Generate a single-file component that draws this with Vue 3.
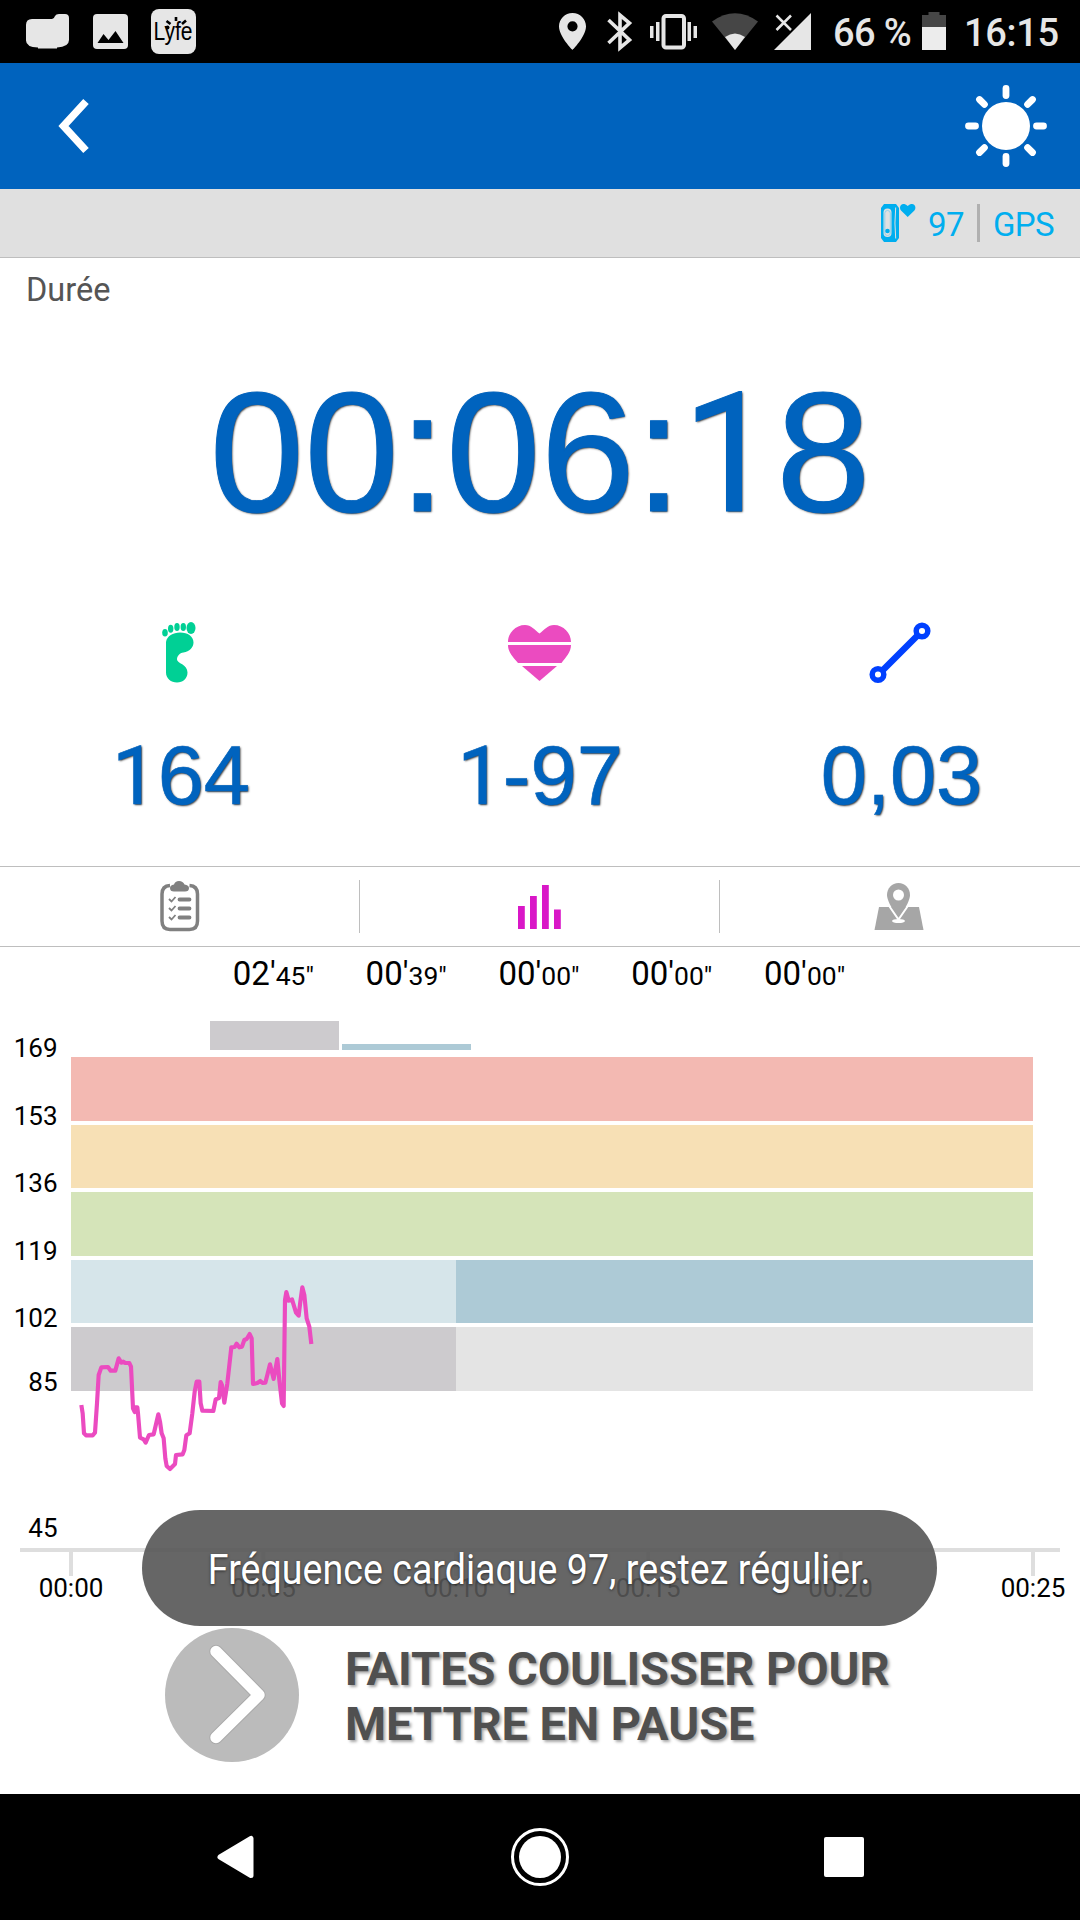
<template>
  <div class="screen">
    <div class="statusbar">
      <svg class="status-left" width="210" height="63" viewBox="0 0 210 63">
        <path d="M26 25q0-6 6-6h20q2 0 3-3 1-2 4-2h6q4 0 4 4v22q0 7-12 7.500v1H38v-1q-12-.5-12-7z" fill="#e6e6e6" />
        <rect x="93" y="14" width="35" height="35" rx="4" fill="#e6e6e6" />
        <path d="M97.500 43l6-9 5 6 7-9 8 12z" fill="#000" />
        <rect x="151" y="9" width="45" height="45" rx="8" fill="#e6e6e6" />
        <text class="lyfe" x="153.500" y="40" textLength="39" lengthAdjust="spacingAndGlyphs">Lyfe</text>
        <path d="M166.500 21l4 3M176 17v4M186 20.500l-4 3.500" stroke="#000" stroke-width="2.600" />
        <circle cx="167.500" cy="27.500" r="2" />
      </svg>
      <div class="status-right">
        <svg width="260" height="63" viewBox="555 0 260 63" fill="#e6e6e6">
          <path fill-rule="evenodd" d="M572.500 13c-7.600 0-13.500 6-13.500 13.300C559 36.500 572.500 50 572.500 50S586 36.500 586 26.300C586 19 580.100 13 572.500 13zm0 8.200a5.100 5.100 0 110 10.200 5.100 5.100 0 010-10.200z" />
          <path d="M608.500 20l21 20-9.500 8V15l9.500 8-21 20" fill="none" stroke="#e6e6e6" stroke-width="3.600" />
          <rect x="663.500" y="16" width="20.500" height="31.500" rx="2.500" fill="none" stroke="#e6e6e6" stroke-width="4" />
          <path d="M650 26h3.500v12H650zM656 22h3.500v19H656zM687.500 22h3.500v19h-3.500zM693.500 26h3.500v12h-3.500z" />
          <path d="M712 21.500Q735 5 758 21.500L735 50z" fill="#464646" />
          <path d="M725 37q10-7 20 0L735 50z" />
          <path d="M811 13v37h-37z" />
          <path d="M776.500 15.500l14.500 14.500M791 15.500l-14.500 14.500" stroke="#e6e6e6" stroke-width="2.500" />
        </svg>
        <span class="percent">66 %</span>
        <svg width="24" height="63" viewBox="0 0 24 63">
          <path d="M0 27V15h6.500v-3h11v3H24v12z" fill="#464646" />
          <path d="M0 27h24v23H0z" fill="#ececec" />
        </svg>
        <span class="clock">16:15</span>
      </div>
    </div>

    <header class="header">
      <svg width="40" height="60" viewBox="0 0 40 60">
        <path d="M32 5.500L9.500 30 32 54.500" fill="none" stroke="#fff" stroke-width="7.500" />
      </svg>
      <svg width="84" height="84" viewBox="-42 -42 84 84">
        <circle r="24" fill="#fff" />
        <path
          v-for="a in 8"
          :key="a"
          d="M0 -30.500V-37.500"
          :transform="`rotate(${a * 45})`"
          stroke="#fff"
          stroke-width="6.800"
          stroke-linecap="round"
        />
      </svg>
    </header>

    <div class="sensors">
      <svg width="35" height="38" viewBox="0 0 35 38" fill="#00aeef">
        <path d="M3 0h12l3 4v30l-3 4H3l-3-4V4z" />
        <path d="M14.700 3.500q-1.500 15.500 0 31" fill="none" stroke="#e0e0e0" stroke-width="1" />
        <rect x="2.500" y="4.500" width="8" height="28.500" rx="4" fill="#e0e0e0" />
        <rect x="3.800" y="6.500" width="5.500" height="25" rx="2.700" fill="none" stroke="#7fcdec" stroke-width=".8" />
        <circle cx="6.500" cy="27" r="2.300" />
        <path d="M26.700 13L20 6.500Q18 3.500 20 1q3.500-2.500 6.700 1 3.200-3.500 6.700-1 2 2.500 0 5.500z" />
      </svg>
      <span class="bpm">97</span>
      <span class="divider" />
      <span class="gps">GPS</span>
    </div>

    <section class="summary">
      <div class="label">Durée</div>
      <div class="timer"><span v-for="(c, i) in duration" :key="i" :class="{ one: c === '1' }">{{ c }}</span></div>
      <div class="stats">
        <div class="stat">
          <svg width="66" height="66" viewBox="147 620 66 66" fill="#00d095">
            <ellipse cx="191" cy="628" rx="4.500" ry="6" />
            <ellipse cx="183.300" cy="627" rx="2.700" ry="4" />
            <ellipse cx="177" cy="627" rx="2.700" ry="4" />
            <ellipse cx="170.700" cy="628.700" rx="2.700" ry="4" />
            <ellipse cx="165" cy="632.700" rx="2.800" ry="3.800" />
            <path d="M166 642c1-6 7-9.500 14-9.500 8 0 13.500 4 13.500 10 0 5-4 9-10 10-4 .5-6.500 3.500-6.500 7 0 4 10.500 4.500 10.500 13 0 6-4.500 10-10.500 10s-11-4-11-10z" />
          </svg>
          <div class="value steps"><span v-for="(c, i) in '164'" :key="i" :class="{ one: c === '1' }">{{ c }}</span></div>
        </div>
        <div class="stat">
          <svg width="66" height="66" viewBox="507 620 66 66" fill="#eb4bc0">
            <path d="M508 642c0-9 7.500-17 17-17 6 0 10 5 14.500 8.500C544 630 548 625 554 625c9.500 0 17 8 17 17z" />
            <path d="M508 645h63c0 7-5 12-9.500 18h-43.500c-5-6-10-11-10-18z" />
            <path d="M522 666h35l-17.500 15z" />
          </svg>
          <div class="value"><span v-for="(c, i) in '1-97'" :key="i" :class="{ one: c === '1' }">{{ c }}</span></div>
        </div>
        <div class="stat">
          <svg width="66" height="66" viewBox="867 620 66 66" fill="none" stroke="#0040ff">
            <path d="M882 671l36-36" stroke-width="6.500" />
            <circle cx="878" cy="674.500" r="5.800" stroke-width="5.500" />
            <circle cx="922" cy="631" r="5.800" stroke-width="5.500" />
          </svg>
          <div class="value distance">0,03</div>
        </div>
      </div>
    </section>

    <nav class="tabs">
      <div class="tab">
        <svg width="40" height="51" viewBox="0 0 40 51" fill="none" stroke="#808080">
          <path d="M10 4.500Q2 5 2 13v27q0 8.500 8 8.500h19.500q8 0 8-8.500V13q0-8-8-8.500" stroke-width="3.500" />
          <path d="M14 10.500q-4 0-4-3.500 0-3 4-3.500 1-3.500 5-3.500t5.500 3.500Q29 4 29 7q0 3.500-4 3.500z" fill="#808080" stroke="none" />
          <path d="M19.500 18.500h10M19.500 27.500h10M19.500 36.500h10" stroke-width="3.800" stroke-linecap="round" />
          <path d="M9 18l2.500 2.500 4-4.500M9 27l2.500 2.500 4-4.500M9 36l2.500 2.500 4-4.500" stroke-width="1.800" />
        </svg>
      </div>
      <div class="tab">
        <svg width="44" height="44" viewBox="0 1 44 44" fill="#d917c7">
          <path d="M0 22h6.800v23H0zM12 12h6.800v33H12zM24 1h6.800v44H24zM36 25.500h6.800V45H36z" />
        </svg>
      </div>
      <div class="tab">
        <svg width="50" height="47" viewBox="0 0 50 47">
          <path d="M5 24h40l4.500 23H.5z" fill="#a6a6a6" />
          <path d="M24.500 0C18 0 13 5 13 12c0 8 11.500 23 11.500 23S36 20 36 12C36 5 31 0 24.500 0z" fill="#a6a6a6" />
          <path d="M15.500 23.500l9 13 9-13" fill="none" stroke="#fff" stroke-width="2" />
          <circle cx="24.500" cy="12" r="5.500" fill="#fff" />
          <ellipse cx="24.500" cy="38" rx="6.500" ry="2" fill="#fff" />
        </svg>
      </div>
    </nav>

    <div class="zones">
      <div v-for="(z, i) in zones" :key="i" class="zone">{{ z[0] }}'<small>{{ z[1] }}"</small></div>
    </div>

    <svg class="chart" width="1080" height="600" viewBox="0 0 1080 600">
      <!-- time spent per zone -->
      <rect x="210" y="1" width="129" height="29" fill="#cdcbce" />
      <rect x="342" y="24" width="129" height="6" fill="#adcad6" />

      <!-- heart rate zones -->
      <rect v-for="b in bands" :key="b.y" x="71" :y="b.y" width="962" :height="b.h" :fill="b.color" />
      <rect x="71" y="240" width="385" height="63" fill="#d6e5ea" />
      <rect x="71" y="307" width="385" height="64" fill="#cdcbce" />

      <text v-for="l in levels" :key="l.v" x="57.500" :y="l.y" text-anchor="end">{{ l.v }}</text>

      <path d="M20 528h1040v4H20z" fill="#dedede" />
      <g v-for="(t, i) in ticks" :key="t">
        <rect :x="69 + i * 192.4" y="532" width="4" height="24" fill="#dedede" />
        <text :x="71 + i * 192.4" y="577" text-anchor="middle">{{ t }}</text>
      </g>

      <g transform="translate(60 250) scale(.33333)">
        <polyline :points="pulse" fill="none" stroke="#eb4bc0" stroke-width="12.500" stroke-linejoin="round" />
      </g>
    </svg>

    <div class="slider">
      <svg width="134" height="134" viewBox="0 0 134 134">
        <circle cx="67" cy="67" r="67" fill="#bbb" />
        <path d="M51 23.500L94 67 51 109.500" fill="none" stroke="#aaa" stroke-width="13.500" stroke-linecap="round" stroke-linejoin="round" />
        <path d="M51 23.500L94 67 51 109.500" fill="none" stroke="#fff" stroke-width="11.500" stroke-linecap="round" stroke-linejoin="round" />
      </svg>
      <div class="slider-text">FAITES COULISSER POUR<br>METTRE EN PAUSE</div>
    </div>

    <div class="navbar">
      <svg width="60" height="60" viewBox="-32 -30 60 60">
        <path d="M-18 0L13 -18.500V18.500z" fill="#fff" stroke="#fff" stroke-width="5" stroke-linejoin="round" />
      </svg>
      <svg width="60" height="60" viewBox="-30 -30 60 60">
        <circle r="27.500" fill="none" stroke="#fff" stroke-width="3" />
        <circle r="21" fill="#fff" />
      </svg>
      <svg width="60" height="60" viewBox="-30 -30 60 60">
        <rect x="-20" y="-20" width="40" height="40" rx="2" fill="#fff" />
      </svg>
    </div>

    <div class="toast">
      <span>Fréquence cardiaque 97, restez régulier.</span>
    </div>
  </div>
</template>

<script setup>
const duration = '00:06:18'

const zones = [
  ['02', '45'],
  ['00', '39'],
  ['00', '00'],
  ['00', '00'],
  ['00', '00'],
]

const bands = [
  { y: 37, h: 64, color: '#f3b9b2' },
  { y: 105, h: 63, color: '#f7e0b5' },
  { y: 172, h: 64, color: '#d5e4b9' },
  { y: 240, h: 63, color: '#adcad6' },
  { y: 307, h: 64, color: '#e4e4e4' },
]

const levels = [
  { v: 169, y: 37 },
  { v: 153, y: 105 },
  { v: 136, y: 172 },
  { v: 119, y: 240 },
  { v: 102, y: 307 },
  { v: 85, y: 371 },
  { v: 45, y: 517 },
]

const ticks = ['00:00', '00:05', '00:10', '00:15', '00:20', '00:25']

const pulse = [
  [64, 405], [68, 430], [72, 490], [78, 496], [98, 496], [105, 488], [111, 400], [116, 315],
  [124, 292], [144, 291], [152, 302], [166, 302], [176, 265], [184, 278], [190, 275], [196, 279],
  [208, 279], [213, 290], [219, 415], [224, 426], [226, 412], [232, 412], [234, 430], [240, 503],
  [251, 508], [257, 518], [267, 495], [281, 493], [295, 433], [300, 455], [305, 490], [311, 505],
  [316, 565], [320, 588], [330, 597], [345, 582], [348, 555], [368, 553], [373, 540], [379, 496],
  [389, 490], [397, 430], [404, 365], [410, 335], [418, 335], [422, 400], [427, 422], [460, 423],
  [467, 388], [477, 384], [482, 336], [486, 345], [493, 398], [502, 340], [514, 232], [524, 231],
  [530, 221], [538, 232], [546, 230], [553, 210], [560, 207], [569, 192], [575, 205], [579, 342],
  [592, 339], [601, 333], [608, 339], [616, 338], [622, 315], [630, 283], [641, 327], [652, 267],
  [658, 330], [666, 400], [671, 408], [675, 90], [679, 66], [686, 92], [696, 88], [708, 128],
  [716, 137], [721, 95], [727, 52], [733, 75], [740, 145], [748, 170], [754, 222],
].join(' ')
</script>

<style>
body {
  margin: 0;
  background: #fff;
}
</style>

<style scoped>
.screen {
  position: relative;
  display: flex;
  flex-direction: column;
  width: 1080px;
  height: 1920px;
  overflow: hidden;
  background: #fff;
  font-family: Roboto, sans-serif;
}

svg {
  display: block;
  flex: none;
}

.statusbar {
  display: flex;
  justify-content: space-between;
  height: 63px;
  background: #000;
  color: #e6e6e6;
  font-size: 38px;
  font-weight: 500;
  line-height: 67px;
}
.lyfe {
  font: 25px 'Liberation Sans', sans-serif;
  fill: #000;
}
.status-right {
  display: flex;
  width: 525px;
}
.percent {
  width: 89px;
  margin-left: 18px;
  letter-spacing: -0.6px;
  white-space: nowrap;
}
.clock {
  margin-left: 18px;
  letter-spacing: -0.3px;
}

.header {
  display: flex;
  justify-content: space-between;
  align-items: center;
  height: 126px;
  padding: 0 32px 0 54px;
  background: #0063be;
}

.sensors {
  display: flex;
  align-items: center;
  justify-content: flex-end;
  box-sizing: border-box;
  height: 69px;
  padding-right: 26px;
  border-bottom: 1px solid #bebebe;
  background: #e0e0e0;
  color: #00aeef;
  font-size: 32px;
}
.bpm,
.gps {
  padding-top: 2px;
  font-size: 33px;
  letter-spacing: -0.6px;
}
.bpm {
  margin-left: 12px;
}
.divider {
  width: 3px;
  height: 38px;
  margin: 0 13px 0 13px;
  background: #b0b0b0;
}

.summary {
  height: 608px;
}
.label {
  height: 112px;
  padding: 13px 26px 0;
  box-sizing: border-box;
  color: #555;
  font-size: 32.500px;
  line-height: 38px;
}
.timer,
.value {
  color: #0063be;
  font-family: 'Liberation Sans', sans-serif;
  text-align: center;
  text-shadow: 1px 1px 2px #333;
}
.timer {
  height: 250px;
  font-size: 170px;
  line-height: 164px;
  -webkit-text-stroke: 1px #0063be;
}
.one {
  font-family: Roboto, sans-serif;
  font-size: 0.98em;
  line-height: 0;
}
.stats {
  display: grid;
  grid-template-columns: repeat(3, 1fr);
}
.stat {
  display: flex;
  flex-direction: column;
  align-items: center;
}
.value {
  margin-top: 44px;
  font-size: 83px;
  line-height: 91px;
  -webkit-text-stroke: 0.6px #0063be;
}
.steps {
  padding-left: 2px;
}
.distance {
  padding-left: 3px;
}

.tabs {
  display: grid;
  grid-template-columns: repeat(3, 1fr);
  align-items: center;
  box-sizing: border-box;
  height: 81px;
  border-top: 1px solid #bebebe;
  border-bottom: 1px solid #bebebe;
}
.tab {
  display: flex;
  align-items: center;
  justify-content: center;
  box-sizing: border-box;
  height: 53px;
}
.tab:not(:last-child) {
  border-right: 1px solid #bebebe;
}
.tab:last-child svg {
  margin-right: 2px;
}

.zones {
  display: flex;
  height: 73px;
  padding-left: 207px;
  font-size: 33px;
  line-height: 54px;
}
.zone {
  width: 132.800px;
  text-align: center;
}
.zone small {
  font-size: 26.500px;
}

.chart text {
  font-size: 26px;
}

.slider {
  display: flex;
  height: 174px;
  padding: 8px 0 0 165px;
  box-sizing: border-box;
}
.slider-text {
  margin: 13px 0 0 46px;
  color: #505050;
  font-size: 47px;
  font-weight: 700;
  line-height: 55px;
  letter-spacing: -0.05px;
  white-space: nowrap;
  text-shadow: 2px 2px 3px rgba(0, 0, 0, 0.35);
}

.navbar {
  display: flex;
  align-items: center;
  justify-content: space-between;
  height: 126px;
  padding: 0 206px;
  background: #000;
}

.toast {
  position: absolute;
  left: 142px;
  top: 1510px;
  display: flex;
  align-items: center;
  justify-content: center;
  box-sizing: border-box;
  width: 795px;
  height: 116px;
  padding-top: 2px;
  border-radius: 58px;
  background: rgba(85, 85, 85, 0.9);
  color: #fff;
  font-size: 42px;
  white-space: nowrap;
  text-shadow: 0 1px 3px rgba(0, 0, 0, 0.6);
}
.toast span {
  transform: scaleX(0.895);
}
</style>
